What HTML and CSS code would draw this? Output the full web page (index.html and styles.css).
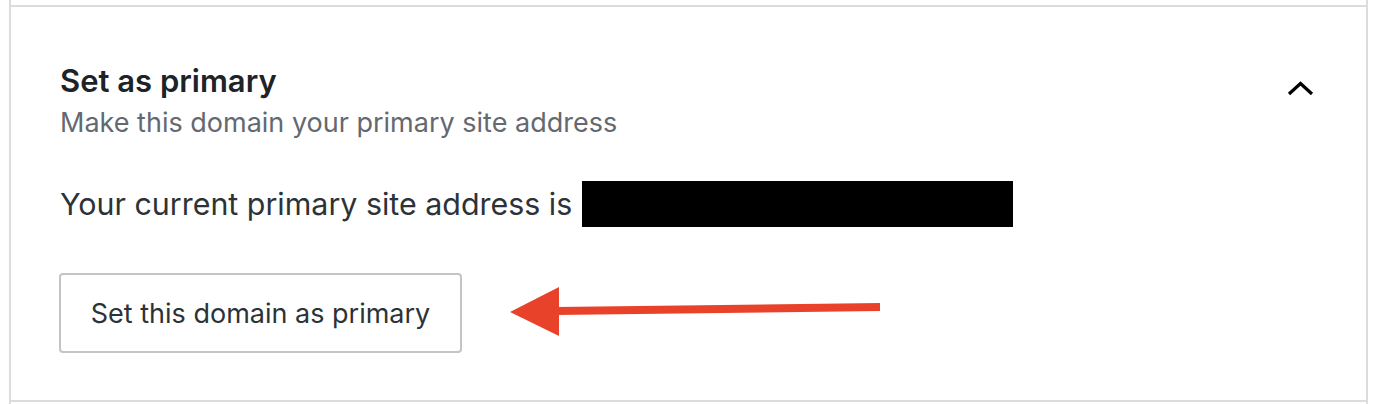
FILE: index.html
```html
<!DOCTYPE html>
<html lang="en">
<head>
    <meta charset="UTF-8">
    <meta name="viewport" content="width=device-width, initial-scale=1.0">
    <title>Set as primary</title>
    <link rel="stylesheet" href="styles.css">
</head>
<body>
    <div class="list">
        <div class="list-item prev"></div>
        <div class="list-item card">
            <div class="card-header">
                <div class="header-text">
                    <h2>Set as primary</h2>
                    <p class="subtitle">Make this domain your primary site address</p>
                </div>
                <svg class="chevron" width="27" height="15" viewBox="0 0 27 15">
                    <polyline points="2,13 13.5,2.5 25,13" fill="none" stroke="#000" stroke-width="3.2"/>
                </svg>
            </div>
            <div class="card-body">
                <p class="current">Your current primary site address is <span class="redacted"></span></p>
                <div class="actions">
                    <button class="btn">Set this domain as primary</button>
                    <svg class="arrow" width="380" height="60" viewBox="0 0 380 60">
                        <polygon points="0,27 49,2 49,51" fill="#e8432a"/>
                        <polygon points="46,22 370,18 370,26 46,30" fill="#e8432a"/>
                    </svg>
                </div>
            </div>
        </div>
        <div class="list-item next"></div>
    </div>
</body>
</html>
```

FILE: styles.css
```css
body {
    margin: 0;
    background-color: #fff;
    font-family: Inter, "Liberation Sans", sans-serif;
    color: #1d2327;
}
.list {
    margin-left: 9px;
    width: 1355px;
    border-left: 2px solid #dcdcde;
    border-right: 2px solid #dcdcde;
}
.prev {
    height: 5px;
}
.card {
    border-top: 2px solid #dcdcde;
    border-bottom: 2px solid #dcdcde;
    padding: 0 49px;
}
.next {
    height: 10px;
}
.card-header {
    display: flex;
    justify-content: space-between;
    align-items: center;
    padding-top: 54px;
}
.card-header h2 {
    margin: 0;
    font-size: 31px;
    font-weight: 600;
    line-height: 40px;
    color: #1d2327;
}
.subtitle {
    margin: 4px 0 0;
    font-size: 27px;
    line-height: 36px;
    color: #646970;
}
.chevron {
    margin-right: 3px;
    margin-top: -26px;
}
.card-body {
    padding-top: 40px;
    padding-bottom: 47px;
}
.current {
    margin: 0;
    font-size: 30.4px;
    line-height: 46px;
    display: flex;
    align-items: center;
    gap: 10px;
    color: #2c3338;
}
.redacted {
    display: inline-block;
    width: 431px;
    height: 46px;
    background-color: #000;
}
.actions {
    display: flex;
    align-items: center;
    margin-top: 46px;
}
.btn {
    width: 403px;
    height: 80px;
    background-color: #fff;
    border: 2px solid #c3c4c7;
    border-radius: 4px;
    font-family: Inter, "Liberation Sans", sans-serif;
    font-size: 27px;
    color: #2c3338;
    padding: 0;
    margin-left: -1px;
}
.arrow {
    margin-left: 48px;
    margin-top: 4px;
}
```
